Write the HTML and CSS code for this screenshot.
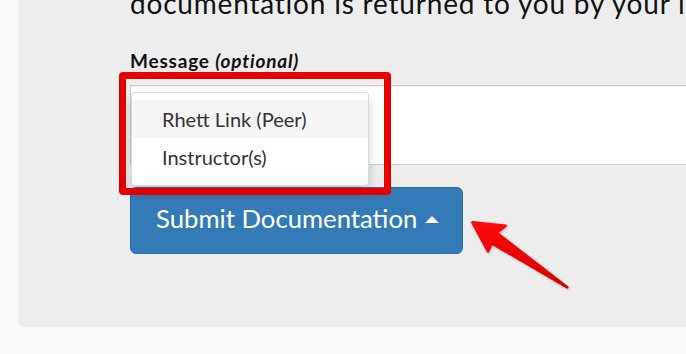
FILE: index.html
```html
<!DOCTYPE html>
<html lang="en">
<head>
<meta charset="utf-8">
<title>Submit Documentation</title>
<link rel="stylesheet" href="styles.css">
</head>
<body>
<div class="panel">
  <p class="lead">documentation is returned to you by your instructor.</p>
  <div class="field">
    <label class="label" for="msg">Message <em>(optional)</em></label>
    <textarea class="message" id="msg"></textarea>
  </div>
  <div class="dropup">
    <button class="btn" type="button">Submit Documentation <span class="caret"></span></button>
    <ul class="menu">
      <li class="item active">Rhett Link (Peer)</li>
      <li class="item">Instructor(s)</li>
    </ul>
  </div>
</div>
<div class="highlight"></div>
<svg class="arrow" width="120" height="90" viewBox="0 0 120 90" aria-hidden="true">
  <defs>
    <linearGradient id="ag" x1="0" y1="0" x2="0" y2="1">
      <stop offset="0" stop-color="#ff0a0a"/>
      <stop offset="1" stop-color="#d80000"/>
    </linearGradient>
  </defs>
  <polygon points="12.3,12.3 45.7,15.7 36.7,22.7 107.3,77.3 31.7,33.3 28,41.5" fill="url(#ag)" stroke="url(#ag)" stroke-width="2.5" stroke-linejoin="round"/>
</svg>
</body>
</html>
```

FILE: styles.css
```css
html, body {
  margin: 0;
  padding: 0;
}
body {
  background: #fafafa;
  font-family: Lato, "Open Sans", sans-serif;
  color: #111;
  width: 686px;
  height: 354px;
  overflow: hidden;
  position: relative;
}
.panel {
  margin: -15px -40px 0 18px;
  padding: 0 0 73px 112px;
  background: #ededed;
  border-radius: 6px;
}
.lead {
  margin: 0;
  font-size: 28px;
  line-height: 36px;
  letter-spacing: 0.8px;
  white-space: nowrap;
  color: #111;
}
.field {
  margin-top: 29px;
}
.label {
  display: block;
  font-size: 19px;
  line-height: 22px;
  letter-spacing: 0.8px;
  font-weight: 700;
  margin-bottom: 13px;
}
.label em {
  font-style: italic;
}
.message {
  display: block;
  box-sizing: border-box;
  width: 100%;
  height: 80px;
  margin: 0;
  border: 1px solid #ccc;
  border-radius: 0;
  background: #fff;
  box-shadow: inset 0 1px 1px rgba(0,0,0,.075);
  resize: none;
}
.dropup {
  position: relative;
  margin-top: 22px;
  width: 333px;
}
.btn {
  display: flex;
  align-items: center;
  box-sizing: border-box;
  width: 333px;
  height: 67px;
  padding: 0 0 3px 25px;
  border: 1px solid #2e6da4;
  border-radius: 6px;
  background: #337ab7;
  color: #fff;
  font-family: Lato, "Open Sans", sans-serif;
  font-size: 25.7px;
  line-height: 1;
  cursor: pointer;
}
.caret {
  display: inline-block;
  width: 0;
  height: 0;
  margin-left: 8px;
  border-left: 7px solid transparent;
  border-right: 7px solid transparent;
  border-bottom: 7px solid #fff;
}
.menu {
  position: absolute;
  left: 1px;
  bottom: calc(100% + 1px);
  box-sizing: border-box;
  width: 238px;
  margin: 0;
  padding: 7px 0 9px;
  list-style: none;
  background: #fff;
  border: 1px solid rgba(0,0,0,.15);
  border-radius: 4px;
  box-shadow: 0 6px 12px rgba(0,0,0,.175);
}
.item {
  height: 38px;
  padding: 0 0 0 30px;
  display: flex;
  align-items: center;
  font-size: 20px;
  color: #333;
}
.item.active {
  background: #f5f5f5;
}
.highlight {
  position: absolute;
  left: 119px;
  top: 72px;
  width: 272px;
  height: 123px;
  box-sizing: border-box;
  border: 7px solid #e40000;
  border-radius: 4px;
}
.arrow {
  position: absolute;
  left: 460px;
  top: 210px;
  filter: drop-shadow(1px 1px 1px rgba(0,0,0,.25));
}
```
